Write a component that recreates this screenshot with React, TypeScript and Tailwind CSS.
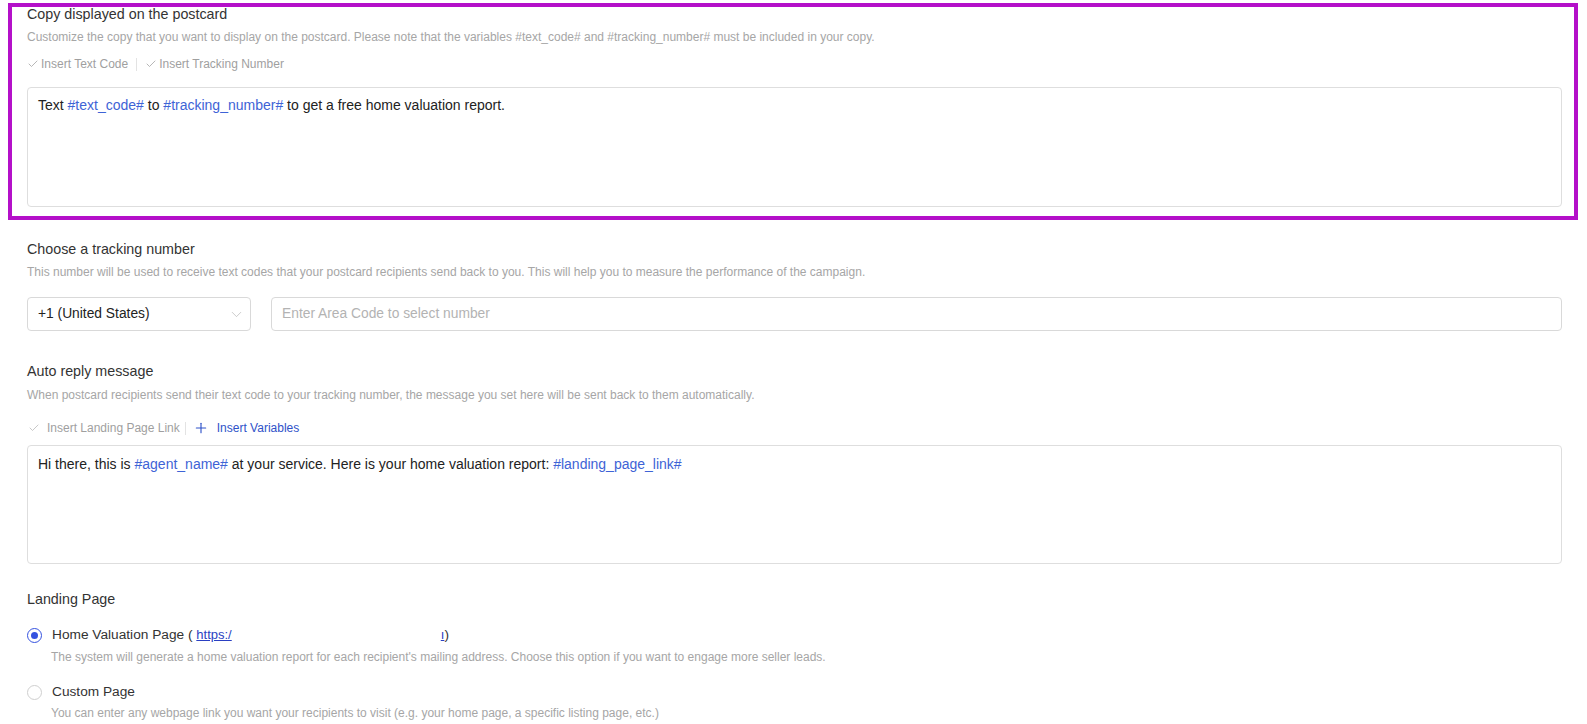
import { ChevronDown, Plus, Check } from "lucide-react";

const sans = { fontFamily: '"Liberation Sans", Arial, sans-serif' };

function Variable({ children }: { children: React.ReactNode }) {
  return <span className="text-[#3e63d6]">{children}</span>;
}

function SectionTitle({ children }: { children: React.ReactNode }) {
  return <h3 className="text-[14.3px] leading-[14px] text-[#333]">{children}</h3>;
}

function SectionHint({ children, className = "" }: { children: React.ReactNode; className?: string }) {
  return <p className={`text-[12px] leading-[16px] text-[#a6a6a6] ${className}`}>{children}</p>;
}

function ToolbarItem({
  icon,
  label,
  active = false,
  wide = false,
}: {
  icon: "check" | "plus";
  label: string;
  active?: boolean;
  wide?: boolean;
}) {
  return (
    <span className={`flex items-center ${active ? "text-[#2f52c9]" : "text-[#9f9f9f]"}`}>
      {icon === "check" ? (
        <Check
          size={12}
          strokeWidth={1.5}
          className={wide ? "mr-[7px] text-[#b5b5b5]" : "mr-[2px]"}
        />
      ) : (
        <Plus size={16} strokeWidth={1.7} className="mr-[8px]" />
      )}
      {label}
    </span>
  );
}

function Divider({ tight = false }: { tight?: boolean }) {
  return <span className={`${tight ? "ml-[5px] mr-[7px]" : "mx-[8px]"} h-[13px] w-px bg-[#e3e3e3]`} />;
}

function Radio({ checked }: { checked?: boolean }) {
  return (
    <span
      className={`flex h-[15px] w-[15px] shrink-0 items-center justify-center rounded-full border bg-white ${
        checked ? "border-[#3552e0]" : "border-[#cfcfcf]"
      }`}
    >
      {checked && <span className="h-[7px] w-[7px] rounded-full bg-[#3552e0]" />}
    </span>
  );
}

export default function App() {
  return (
    <div className="h-[724px] w-full overflow-hidden bg-white pl-[8px] pr-[9px]" style={sans}>
      {/* ─── Postcard copy (highlighted) ─── */}
      <section className="mt-[3px] border-4 border-[#b410c9] pb-[9px] pl-[15px] pr-[12px]">
        <SectionTitle>Copy displayed on the postcard</SectionTitle>
        <SectionHint className="mt-2">
          Customize the copy that you want to display on the postcard. Please note that the variables #text_code# and
          #tracking_number# must be included in your copy.
        </SectionHint>
        <div className="mt-[11px] flex h-[16px] items-center text-[12px]">
          <ToolbarItem icon="check" label="Insert Text Code" />
          <Divider />
          <ToolbarItem icon="check" label="Insert Tracking Number" />
        </div>
        <div className="mt-[15px] h-[120px] rounded-[4px] border border-[#dedede] pl-[10px] pt-[7px] text-[14px] leading-[20px] text-[#222]">
          Text <Variable>#text_code#</Variable> to <Variable>#tracking_number#</Variable> to get a free home valuation
          report.
        </div>
      </section>

      <div className="pl-[19px] pr-[16px]">
        {/* ─── Tracking number ─── */}
        <section className="mt-[22px]">
          <SectionTitle>Choose a tracking number</SectionTitle>
          <SectionHint className="mt-2">
            This number will be used to receive text codes that your postcard recipients send back to you. This will
            help you to measure the performance of the campaign.
          </SectionHint>
          <div className="mt-[17px] flex gap-[20px]">
            <div className="flex h-[34px] w-[224px] items-center justify-between rounded-[4px] border border-[#d9d9d9] pl-[10px] pr-[5px] text-[13.8px] text-[#222]">
              <span>+1 (United States)</span>
              <ChevronDown size={17} strokeWidth={1} className="text-[#b5b5b5]" />
            </div>
            <div className="flex h-[34px] flex-1 items-center rounded-[4px] border border-[#d9d9d9] pl-[10px] text-[13.8px] text-[#b3b3b3]">
              Enter Area Code to select number
            </div>
          </div>
        </section>

        {/* ─── Auto reply ─── */}
        <section className="mt-[33px]">
          <SectionTitle>Auto reply message</SectionTitle>
          <SectionHint className="mt-[9px]">
            When postcard recipients send their text code to your tracking number, the message you set here will be sent
            back to them automatically.
          </SectionHint>
          <div className="mt-[17px] flex h-[16px] items-center pl-[1px] text-[12px]">
            <ToolbarItem icon="check" label="Insert Landing Page Link" wide />
            <Divider tight />
            <ToolbarItem icon="plus" label="Insert Variables" active />
          </div>
          <div className="mt-[9px] h-[119px] rounded-[4px] border border-[#dedede] pl-[10px] pt-[8px] text-[14px] leading-[20px] text-[#222]">
            Hi there, this is <Variable>#agent_name#</Variable> at your service. Here is your home valuation report:{" "}
            <Variable>#landing_page_link#</Variable>
          </div>
        </section>

        {/* ─── Landing page ─── */}
        <section className="mt-[28px]">
          <SectionTitle>Landing Page</SectionTitle>

          <div className="mt-[19px] flex h-[20px] items-center gap-[10px] text-[13.7px] text-[#333]">
            <Radio checked />
            <span>
              Home Valuation Page ({" "}
              <a className="text-[13px] text-[#2a3fc2] underline">https:/</a>
              <span className="inline-block w-[209px]" />
              <span className="text-[13px] text-[#2a3fc2] underline">ı</span>)
            </span>
          </div>
          <SectionHint className="ml-[24px] mt-[4px]">
            The system will generate a home valuation report for each recipient's mailing address. Choose this option if
            you want to engage more seller leads.
          </SectionHint>

          <div className="mt-[17px] flex h-[20px] items-center gap-[10px] text-[13.7px] text-[#333]">
            <Radio />
            <span>Custom Page</span>
          </div>
          <SectionHint className="ml-[24px] mt-[3px]">
            You can enter any webpage link you want your recipients to visit (e.g. your home page, a specific listing
            page, etc.)
          </SectionHint>
        </section>
      </div>
    </div>
  );
}
